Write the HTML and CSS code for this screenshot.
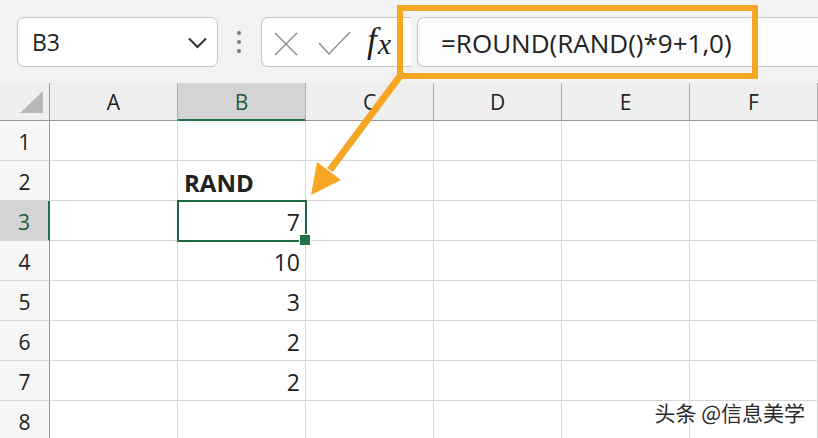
FILE: index.html
```html
<!DOCTYPE html>
<html lang="zh">
<head>
<meta charset="utf-8">
<title>RAND</title>
<link rel="stylesheet" href="styles.css">
</head>
<body>
<div class="app">
  <div class="toolbar">
    <div class="namebox">
      <span class="name">B3</span>
      <svg class="chev" width="19" height="12" viewBox="0 0 19 12"><polyline points="1,1.5 9.5,10 18,1.5" fill="none" stroke="#333" stroke-width="2"/></svg>
    </div>
    <div class="dots"><i></i><i></i><i></i></div>
    <div class="fbar">
      <div class="ficons">
        <svg class="ico-x" width="24" height="24" viewBox="0 0 24 24"><path d="M1 1 L23 23 M23 1 L1 23" stroke="#8c8c8c" stroke-width="1.4" fill="none"/></svg>
        <svg class="ico-ok" width="33" height="26" viewBox="0 0 33 26"><path d="M1 13 L11 24 L32 2" stroke="#8c8c8c" stroke-width="1.4" fill="none"/></svg>
        <span class="fx">f<span class="fxx">x</span></span>
      </div>
      <div class="finput">=ROUND(RAND()*9+1,0)</div>
    </div>
  </div>

  <div class="grid">
    <div class="hd corner"><svg width="23" height="22" viewBox="0 0 23 22"><polygon points="23,0 23,22 0,22" fill="#b8b8b8"/></svg></div>
    <div class="hd">A</div>
    <div class="hd sel">B</div>
    <div class="hd">C</div>
    <div class="hd">D</div>
    <div class="hd">E</div>
    <div class="hd">F</div>

    <div class="rh">1</div><div class="c"></div><div class="c"></div><div class="c"></div><div class="c"></div><div class="c"></div><div class="c"></div>
    <div class="rh">2</div><div class="c"></div><div class="c lbl">RAND</div><div class="c"></div><div class="c"></div><div class="c"></div><div class="c"></div>
    <div class="rh sel">3</div><div class="c"></div><div class="c num active">7</div><div class="c"></div><div class="c"></div><div class="c"></div><div class="c"></div>
    <div class="rh">4</div><div class="c"></div><div class="c num">10</div><div class="c"></div><div class="c"></div><div class="c"></div><div class="c"></div>
    <div class="rh">5</div><div class="c"></div><div class="c num">3</div><div class="c"></div><div class="c"></div><div class="c"></div><div class="c"></div>
    <div class="rh">6</div><div class="c"></div><div class="c num">2</div><div class="c"></div><div class="c"></div><div class="c"></div><div class="c"></div>
    <div class="rh">7</div><div class="c"></div><div class="c num">2</div><div class="c"></div><div class="c"></div><div class="c"></div><div class="c"></div>
    <div class="rh">8</div><div class="c"></div><div class="c"></div><div class="c"></div><div class="c"></div><div class="c"></div><div class="c"></div>
  </div>

  <div class="frame"></div>
  <svg class="arrow" width="818" height="438" viewBox="0 0 818 438">
    <line x1="403" y1="72" x2="330" y2="170" stroke="#f5a623" stroke-width="7"/>
    <polygon points="311,195 341,180 317,162" fill="#f5a623"/>
  </svg>
  <div class="watermark">头条 @信息美学</div>
</div>
</body>
</html>
```

FILE: styles.css
```css
* { box-sizing: border-box; }
html, body { margin: 0; padding: 0; }
body {
  width: 818px;
  height: 438px;
  overflow: hidden;
  background: #f2f2f2;
  font-family: "Open Sans", "Noto Sans", "Liberation Sans", sans-serif;
  color: #222;
}
.app { position: relative; width: 818px; height: 438px; overflow: hidden; }

.toolbar {
  height: 83px;
  display: flex;
  align-items: flex-start;
  padding: 17px 0 0 17px;
  background: #f2f2f2;
}
.namebox {
  width: 201px;
  height: 50px;
  background: #fff;
  border: 1px solid #c6c6c6;
  border-radius: 7px;
  display: flex;
  align-items: center;
  justify-content: space-between;
  padding: 0 10px 0 14px;
}
.name { font-size: 23px; color: #222; }
.chev { margin-top: 2px; }
.dots {
  width: 4px;
  height: 50px;
  margin: 0 20px 0 19px;
  display: flex;
  flex-direction: column;
  justify-content: center;
  gap: 5px;
}
.dots i { display: block; width: 4px; height: 4px; border-radius: 50%; background: #7a7a7a; }

.fbar { flex: 1; display: flex; height: 50px; }
.ficons {
  width: 150px;
  height: 50px;
  background: #fff;
  border: 1px solid #c6c6c6;
  border-right: none;
  border-radius: 7px 0 0 7px;
  display: flex;
  align-items: center;
  padding-left: 12px;
}
.ico-x { margin-right: 20px; margin-top: 4px; }
.ico-ok { margin-right: 16px; margin-top: 2px; }
.fx {
  font-family: "Liberation Serif", "DejaVu Serif", serif;
  font-style: italic;
  font-size: 35px;
  color: #222;
  line-height: 1;
  margin-top: -3px;
}
.fxx { font-size: 30px; position: relative; top: 2px; margin-left: 1px; }
.finput {
  flex: 1;
  height: 50px;
  margin-left: 6px;
  background: #fcfcfc;
  border: 1px solid #c6c6c6;
  border-right: none;
  border-radius: 7px 0 0 7px;
  display: flex;
  align-items: center;
  padding-left: 23px;
  font-size: 26px;
  color: #222;
  white-space: nowrap;
  padding-top: 1px;
}

.grid {
  display: grid;
  grid-template-columns: 50px repeat(6, 128px);
  grid-template-rows: 38px repeat(8, 40px);
}
.hd {
  background: #efefef;
  border-right: 1px solid #adadad;
  border-bottom: 1px solid #9a9a9a;
  display: flex;
  align-items: center;
  justify-content: center;
  font-size: 21px;
  color: #222;
  padding-top: 1px;
}
.hd.corner {
  border-right: 1px solid #9a9a9a;
  align-items: flex-end;
  justify-content: flex-end;
  padding: 0 6px 7px 0;
}
.hd.sel {
  background: #d4d4d4;
  border-bottom: 2px solid #217346;
  color: #1f5a3d;
}
.rh {
  background: #f6f6f6;
  border-right: 1px solid #9a9a9a;
  border-bottom: 1px solid #d6d6d6;
  display: flex;
  align-items: center;
  justify-content: center;
  font-size: 21px;
  color: #222;
  padding-top: 2px;
}
.rh.sel {
  background: #d4d4d4;
  border-right: 2px solid #217346;
  color: #1f5a3d;
}
.c {
  background: #fff;
  border-right: 1px solid #d6d6d6;
  border-bottom: 1px solid #d6d6d6;
  display: flex;
  align-items: center;
  font-size: 23px;
  color: #222;
  padding-top: 3px;
}
.c.num { justify-content: flex-end; padding-right: 5px; }
.c.lbl { font-weight: 700; padding-left: 6px; font-size: 24px; }
.c.active { position: relative; z-index: 2; }
.c.active::before {
  content: "";
  position: absolute;
  left: -1px;
  top: -1px;
  right: -2px;
  bottom: -2px;
  border: 2.5px solid #1e6b41;
}
.c.active::after {
  content: "";
  position: absolute;
  right: -6px;
  bottom: -6px;
  width: 10px;
  height: 10px;
  background: #217346;
  border: 1px solid #fff;
}

.frame {
  position: absolute;
  left: 397px;
  top: 5px;
  width: 361px;
  height: 74px;
  border: 6px solid #f5a623;
  z-index: 3;
}
.arrow { position: absolute; left: 0; top: 0; z-index: 4; pointer-events: none; }
.watermark {
  position: absolute;
  right: 13px;
  bottom: 11px;
  z-index: 5;
  font-family: "Noto Sans CJK SC", "Noto Sans", sans-serif;
  font-size: 21px;
  color: #2a2a2a;
  text-shadow: 0 0 2px #fff, 0 0 2px #fff;
}
```
